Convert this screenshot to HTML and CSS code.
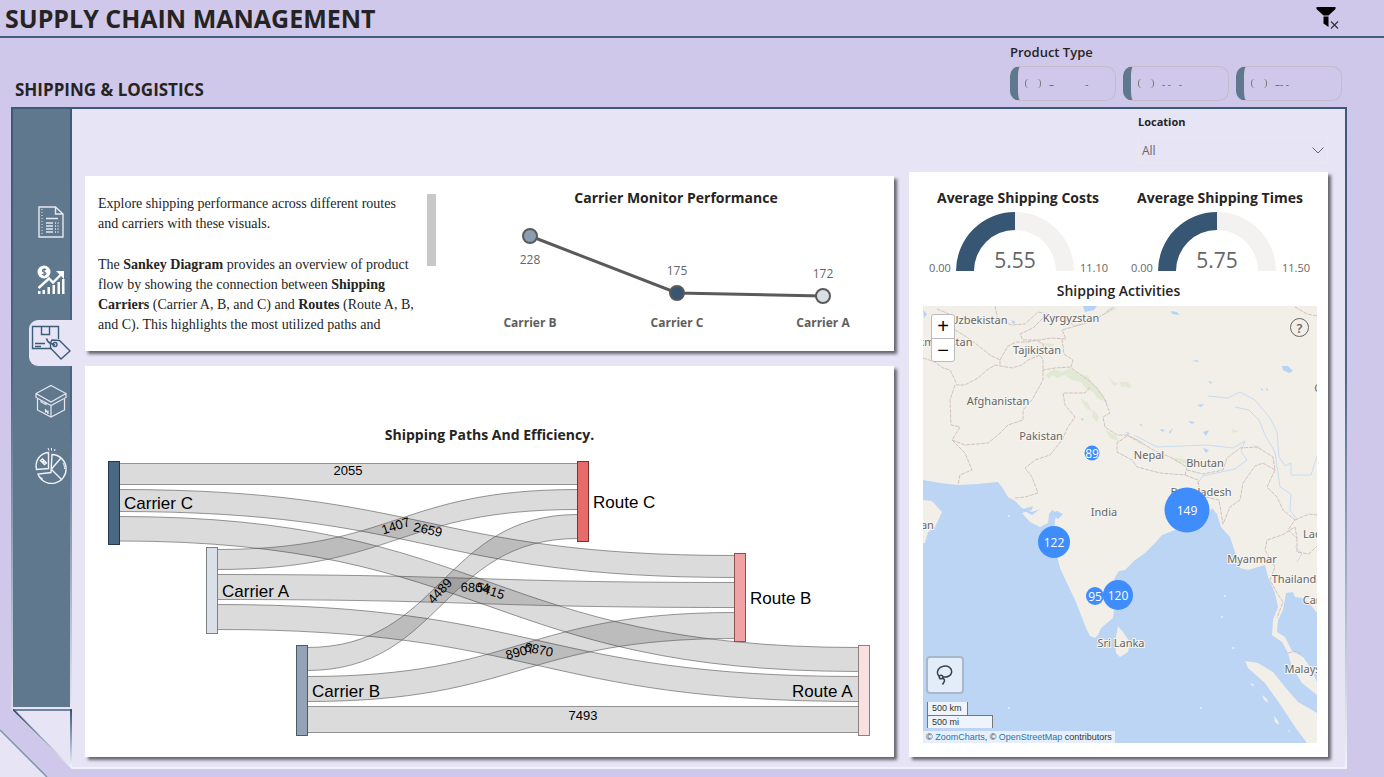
FILE: index.html
```html
<!DOCTYPE html>
<html lang="en">
<head>
    <meta charset="UTF-8">
    <meta name="viewport" content="width=device-width, initial-scale=1.0">
    <title>Supply Chain Management</title>
    <link rel="stylesheet" href="styles.css">
</head>

<body>
    <header class="topbar">
        <h1>SUPPLY CHAIN MANAGEMENT</h1>
        <button class="clear-filter" type="button" aria-label="Clear filters">
            <svg width="24" height="24" viewBox="0 0 24 24">
                <path d="M1.500 1h19v2l-7 6.500h-5l-7-6.500z"/>
                <path d="M8.500 10.500h5v10.500l-5-3.500z"/>
                <path d="M16 15.500l7 7M23 15.500l-7 7" fill="none" stroke="#333" stroke-width="1.200"/>
            </svg>
        </button>
    </header>

    <div class="subbar">
        <h2 class="page-title">SHIPPING &amp; LOGISTICS</h2>
        <fieldset class="slicer">
            <legend>Product Type</legend>
            <div class="slicer-options">
                <label class="option"><input type="radio" name="product"><span>–            -</span></label>
                <label class="option"><input type="radio" name="product"><span>- -   -</span></label>
                <label class="option"><input type="radio" name="product"><span>–- -</span></label>
            </div>
        </fieldset>
    </div>

    <main class="panel">
        <div class="side">
            <nav class="side-nav">
                <a href="#" aria-label="Report">
                    <svg width="26" height="32" viewBox="0 0 26 32" fill="none" stroke="#e6e8f2" stroke-width="1.400">
                        <path d="M1 1h16.500l7.500 7v23H1zM17.500 1v7H25"/>
                        <path d="M4 3v26" stroke-dasharray="1 2" stroke-width="1"/>
                        <path d="M8 12.500h12"/>
                        <path d="M8 17h7M8 20h7M8 23h7M8 26h7M17 17h1M19.500 17h1M17 20h1M19.500 20h1M17 23h1M19.500 23h1M17 26h1M19.500 26h1"/>
                    </svg>
                </a>
                <a href="#" aria-label="Sales">
                    <svg width="28" height="30" viewBox="0 0 28 30" fill="#fff">
                        <circle cx="7" cy="7" r="6.500"/>
                        <path d="M9 5c-.8-1.200-3.600-1-3.600.6 0 1.700 3.600 1.100 3.600 2.900 0 1.600-3 1.800-4 .5M7.100 3.200v7.800" fill="none" stroke="#5f788e" stroke-width="1.200"/>
                        <path d="M1.500 23l10.500-9.500 4 4L25 8.500" fill="none" stroke="#fff" stroke-width="2.400"/>
                        <path d="M19 6h8v8z"/>
                        <path d="M1 26h2.500v3H1zM5.500 25H8v4H5.500zM10.500 22H13v7h-2.500zM15.500 20H18v9h-2.500zM20.500 17H23v12h-2.500zM25 14h2.500v15H25z"/>
                    </svg>
                </a>
                <a href="#" class="active" aria-label="Shipping and logistics">
                    <svg width="40" height="36" viewBox="0 0 40 36" fill="none" stroke="#3d5c78" stroke-width="1.400">
                        <path d="M27.500 14V1.500H1.500v22H21M10.500 1.500v8h8v-8"/>
                        <path d="M4 18.500h10M4 21.500h6"/>
                        <path d="M19.500 18l1.500-3 7.500.500L39 26l-9 8-10.500-11z"/>
                        <circle cx="24" cy="19.500" r="2"/>
                        <path d="M24 20l-4-1.500c-3-1-4-3-4.500-5"/>
                    </svg>
                </a>
                <a href="#" aria-label="Inventory">
                    <svg width="32" height="34" viewBox="0 0 32 34" fill="none" stroke="#e6e8f2" stroke-width="1.200">
                        <path d="M16 1.500L31 9.500v4l-15 8L1 13.500v-4zM1 9.500L16 18l15-8.500M16 21.500V33"/>
                        <path d="M2.500 15v11L16 33l13.500-7V15"/>
                        <path d="M6 16.500v1.500l5 2.500v-2M10.500 25v3.500M13 26.500V30M10.500 26l2.500 3"/>
                    </svg>
                </a>
                <a href="#" class="last" aria-label="Breakdown">
                    <svg width="34" height="36" viewBox="0 0 34 36" fill="none" stroke="#f2f3f8" stroke-width="1.400">
                        <path d="M18 6.500a14.500 14.500 0 1 1-14 19.500l13-1.500z"/>
                        <path d="M17.500 21L27 10M17.500 21.500L28 32"/>
                        <path d="M14.500 4.500C6 5 .5 13 2.500 21.500l12-1z"/>
                        <path d="M6.500 12.500l2-1.500 1.500 1.500-2 1.500zM9 15l2-1.500 1.500 1.500-2 1.500z"/>
                        <path d="M14 0l1 2.500M17.500 0v2.500M21 1l-.5 2" stroke-width="1"/>
                        <path d="M29 15c1.500 2.500 1.500 4 1.500 6M6 29l3 2" stroke-width="1"/>
                    </svg>
                </a>
            </nav>
            <svg class="fold" viewBox="0 0 60 58" preserveAspectRatio="none">
                <defs>
                    <linearGradient id="fade" x1="0" y1="0" x2="0" y2="1">
                        <stop offset="0" stop-color="#2f5272"/>
                        <stop offset="1" stop-color="#f0f4fc"/>
                    </linearGradient>
                </defs>
                <path d="M0 1h60" stroke="#4a6580" stroke-width="1.500"/>
                <path d="M0 0l1 0 58 58h-2L0 2z" fill="url(#fade)"/>
                <path d="M58 0h2v58h-2z" fill="url(#fade)"/>
            </svg>
        </div>

        <div class="content">
            <div class="left-col">
                <section class="card overview">
                    <div class="story">
                        <div class="story-text">
                            <p>Explore shipping performance across different routes and carriers with these visuals.</p>
                            <p>The <b>Sankey Diagram</b> provides an overview of product flow by showing the connection between <b>Shipping Carriers</b> (Carrier A, B, and C) and <b>Routes</b> (Route A, B, and C). This highlights the most utilized paths and</p>
                        </div>
                        <div class="thumb"></div>
                    </div>
                    <div class="monitor">
                        <h3>Carrier Monitor Performance</h3>
                        <svg class="chart" viewBox="0 0 436 130">
                            <path d="M72 28L219 85L365 88" fill="none" stroke="#5a5a5a" stroke-width="3"/>
                            <g stroke="#5a5a5a" stroke-width="2">
                                <circle cx="72" cy="28" r="7" fill="#8a9db1"/>
                                <circle cx="219" cy="85" r="7" fill="#375673"/>
                                <circle cx="365" cy="88" r="7" fill="#d8dfe7"/>
                            </g>
                            <g class="value">
                                <text x="72" y="56">228</text>
                                <text x="219" y="67">175</text>
                                <text x="365" y="70">172</text>
                            </g>
                            <g class="category">
                                <text x="72" y="119">Carrier B</text>
                                <text x="219" y="119">Carrier C</text>
                                <text x="365" y="119">Carrier A</text>
                            </g>
                        </svg>
                    </div>
                </section>

                <section class="card paths">
                    <h3>Shipping Paths And Efficiency.</h3>
                    <svg class="chart" viewBox="0 0 809 300">
                        <g class="flow">
                            <path d="M34 13.500H493V34.500H34z"/>
                            <path d="M34 39.500C342 39.500 342 105.500 650 105.500V127.500C342 127.500 342 61.500 34 61.500z"/>
                            <path d="M34 66.500C404 66.500 404 197.500 774 197.500V221.500C404 221.500 404 91 34 91z"/>
                            <path d="M132 99.500C312 99.500 312 39.500 493 39.500V59.500C312 59.500 312 119.500 132 119.500z"/>
                            <path d="M132 124.500C391 124.500 391 132.500 650 132.500V157.500C391 157.500 391 149.500 132 149.500z"/>
                            <path d="M132 154.500C453 154.500 453 226.500 774 226.500V251.500C453 251.500 453 179.500 132 179.500z"/>
                            <path d="M222 197.500C357 197.500 357 64.500 493 64.500V88.500C357 88.500 357 220.500 222 220.500z"/>
                            <path d="M222 226.500C436 226.500 436 162.500 650 162.500V188.500C436 188.500 436 251.500 222 251.500z"/>
                            <path d="M222 256.500H774V282.500H222z"/>
                        </g>
                        <g class="flow-value">
                            <text x="263" y="25">2055</text>
                            <text transform="translate(312 80) rotate(-18)">1407</text>
                            <text transform="translate(342 84) rotate(12)">2659</text>
                            <text transform="translate(358 144) rotate(-47)">4489</text>
                            <text transform="translate(390 142) rotate(2)">6804</text>
                            <text transform="translate(404 145) rotate(18)">5415</text>
                            <text transform="translate(436 206) rotate(-15)">8907</text>
                            <text transform="translate(453 204) rotate(11)">6870</text>
                            <text x="498" y="270">7493</text>
                        </g>
                        <g class="node">
                            <rect x="23.500" y="11.500" width="11" height="83" fill="#4b6882" stroke="#1f3a52"/>
                            <rect x="121.500" y="97.500" width="11" height="86" fill="#dae0e8" stroke="#7b8085"/>
                            <rect x="211.500" y="195.500" width="11" height="90" fill="#93a3b5" stroke="#4d5b69"/>
                            <rect x="492.500" y="11.500" width="11" height="80" fill="#e76b6b" stroke="#7e2f2f"/>
                            <rect x="649.500" y="103.500" width="11" height="88" fill="#efa3a5" stroke="#8a5052"/>
                            <rect x="773.500" y="195.500" width="11" height="90" fill="#f8dfe0" stroke="#8f7f80"/>
                        </g>
                        <g class="node-label">
                            <text x="39" y="59">Carrier C</text>
                            <text x="137" y="147">Carrier A</text>
                            <text x="227" y="247">Carrier B</text>
                            <text x="508" y="58">Route C</text>
                            <text x="665" y="154">Route B</text>
                            <text x="707" y="247">Route A</text>
                        </g>
                    </svg>
                </section>
            </div>

            <div class="right-col">
                <div class="location">
                    <label for="location">Location</label>
                    <div class="select-box">
                        <select id="location">
                            <option>All</option>
                        </select>
                        <svg width="12" height="7" viewBox="0 0 12 7"><path d="M.5.5L6 6 11.500.5" fill="none" stroke="#666"/></svg>
                    </div>
                </div>

                <section class="card shipping">
                    <div class="gauges">
                        <div class="gauge">
                            <h3>Average Shipping Costs</h3>
                            <svg class="chart" viewBox="0 0 202 68">
                                <path d="M39 63A59 59 0 0 1 98 4V22A41 41 0 0 0 57 63z" fill="#375673"/>
                                <path d="M98 4A59 59 0 0 1 157 63H139A41 41 0 0 0 98 22z" fill="#f3f2f1"/>
                                <text class="gauge-value" x="98" y="60">5.55</text>
                                <text class="gauge-end" x="23" y="64">0.00</text>
                                <text class="gauge-end" x="177" y="64">11.10</text>
                            </svg>
                        </div>
                        <div class="gauge">
                            <h3>Average Shipping Times</h3>
                            <svg class="chart" viewBox="0 0 202 68">
                                <path d="M39 63A59 59 0 0 1 98 4V22A41 41 0 0 0 57 63z" fill="#375673"/>
                                <path d="M98 4A59 59 0 0 1 157 63H139A41 41 0 0 0 98 22z" fill="#f3f2f1"/>
                                <text class="gauge-value" x="98" y="60">5.75</text>
                                <text class="gauge-end" x="23" y="64">0.00</text>
                                <text class="gauge-end" x="177" y="64">11.50</text>
                            </svg>
                        </div>
                    </div>
                    <h3 class="map-title">Shipping Activities</h3>
                    <div class="map">
                        <svg class="chart" viewBox="0 0 394 437">
                            <rect width="394" height="437" fill="#bcd5f4"/>
                            <!-- land -->
                            <g fill="#f2efe9">
                                <path d="M0 0H394V307L387 298 380 292 372 291 370 286 363 287 360 304 355 314 354 326 362 331 369 345 380 351 387 361 394 376V389L379 377 369 361 365 347 359 336 349 329 350 314 355 301 352 287 345 271 342 259 335 261 325 264 317 262 312 246 307 231 298 221 294 208 289 202 280 216 252 224 239 229 232 237 222 247 212 254 202 264 196 265 192 271 189 285 191 304 190 312 184 317 178 322 175 329 172 332 167 330 163 322 160 314 152 294 144 277 137 262 135 254 131 234 132 214 134 207 129 204 126 208 125 217 117 221 107 216 99 207 109 204 110 200 100 203 92 195 85 191 79 181 75 176 54 178 35 179 17 177 0 174z"/>
                                <path d="M0 194L9 195 19 206 12 221 5 226 2 237H0z"/>
                                <path d="M195 320L200 326 207 336 205 346 197 351 193 347 192 336z"/>
                                <path d="M322 355L335 357 350 366 362 381 375 396 389 404 394 407V437H384L372 421 359 401 342 377 325 362z"/>
                                <path d="M339 389l4 3 3 5-5-3zM351 410l4 5 1 4-4-3zM327 377l5 2-3 1zM364 422l3 3v2z"/>
                                <circle cx="302" cy="290" r="1"/><circle cx="299" cy="311" r="1"/><circle cx="310" cy="342" r="1"/><circle cx="278" cy="402" r="1"/><circle cx="86" cy="402" r="1"/><circle cx="86" cy="210" r="1"/>
                            </g>
                            <!-- hills -->
                            <g fill="#dbe7cd" opacity=".7">
                                <path d="M123 68l8-5 8 3 8-4 9 6 9 2 4 6 6 7 7 8-2 4-6-3-4-6-7-3-5-7-9-2-7-5-8 3-4-3-5 4zM157 92l8 5 4 9-6-4zM170 103l6 8-2 6-5-7zM182 124l10 5 5 7-10-4zM185 70l6 6 5 2-5 2zM196 75l12 4v3l-10-3z"/>
                                <path d="M197 76h8l2 3-9 2zM247 151l14 2 14 3-8 3-15-4zM308 123l8 2-6 2zM208 130l8 4 8 6-9-3zM328 138l10 3-4 2zM118 37l14 1-6 4zM190 0l4 2-14 8 6-8z"/>
                            </g>
                            <!-- lakes and rivers -->
                            <g fill="#b5d3f6">
                                <path d="M160 0h14l-3 4-9 2zM359 60l6 0 5 5-4 2-6-3zM248 5l6 1 2 3-7-1zM269 55l5-1 2 2zM0 4l4 4-3 4zM88 14l5 2-3 2zM285 75l4 1-1 2zM337 82l3 1v2zM342 82l3 1v2zM274 99l7-1-3 3zM265 115l7 1-3 2zM216 118l4 1-2 1zM237 123l5 1-3 2zM246 126l4-4-3 6zM280 126l6-2-3 6zM280 142l6 2-3 3zM158 112l3 1-2 2zM181 94l3 1-1 2zM203 126l4 1-2 2zM128 208l6-3 6 3-5 5zM95 201l14 5 8-3-8 6z"/>
                            </g>
                            <path class="river" d="M211 129L234 141 284 139 310 142 322 135 318 145 324 154 312 163 280 170 274 178M285 90L305 92 317 86 332 94 347 112 354 126 356 151 362 160 368 157 368 169 388 169 394 150M312 101L326 104 336 114 342 129 352 146 357 181 368 188 367 204 374 214M372 240l7 8-5 8"/>
                            <!-- borders -->
                            <g class="border">
                                <path d="M0 52L12 56 20 62 27 64 32 74 34 79 42 79 55 72 64 64 72 59 89 62 99 59 105 54 117 49 120 54 120 66"/>
                                <path d="M32 79L27 94 28 119 37 121 29 134 42 147 49 164 37 169 35 179"/>
                                <path d="M29 134L42 139 65 137 75 129 85 119 100 114 100 104 109 94 120 74 120 64 132 62 147 61 165 74 174 82 182 94 187 107 180 111 182 121 194 129 204 129 212 134"/>
                                <path d="M14 3L26 8 32 24 42 30 52 37 67 49 77 54 77 59M72 0L75 14 89 19 102 18 115 6 124 8 110 22 97 28 100 34 113 34 120 38 121 48M77 54L85 40 93 36 104 36M124 10L140 12 152 20 170 15 190 2M104 36L128 32 143 33 139 24 160 18M139 33L141 48 150 54 148 61"/>
                                <path d="M167 81L162 87 140 87 142 99 152 111 145 121 139 134 127 149 112 154 102 162 109 171 115 187 102 191 92 192"/>
                                <path d="M204 130L194 137 194 146 209 154 214 161 237 167 262 169 264 161 247 151 230 144 214 134 204 129"/>
                                <path d="M264 164L280 168 300 164 304 152 317 142 334 141 350 151 352 164 340 157 332 160 320 177 317 194 307 201 300 218 296 194 278 190 275 174 262 169"/>
                                <path d="M352 164L344 181 354 191 360 204 372 214 365 224 374 232 372 221 359 229 344 234 342 244 352 261 347 274 354 287 360 296 354 312M372 214L386 208 394 209M374 232L374 246 386 248 394 240M372 1L384 8 394 10M365 347L374 345 379 348"/>
                            </g>
                            <g class="place">
                                <text x="56" y="18">Uzbekistan</text>
                                <text x="148" y="16">Kyrgyzstan</text>
                                <text x="14" y="40">Turkmenistan</text>
                                <text x="114" y="48">Tajikistan</text>
                                <text x="75" y="99">Afghanistan</text>
                                <text x="118" y="134">Pakistan</text>
                                <text x="226" y="153">Nepal</text>
                                <text x="282" y="161">Bhutan</text>
                                <text x="278" y="190">Bangladesh</text>
                                <text x="181" y="210">India</text>
                                <text x="-5" y="223">Oman</text>
                                <text x="392" y="232">Laos</text>
                                <text x="329" y="257">Myanmar</text>
                                <text x="371" y="277">Thailand</text>
                                <text x="406" y="298">Cambodia</text>
                                <text x="198" y="341">Sri Lanka</text>
                                <text x="384" y="367">Malaysia</text>
                                <text x="406" y="86">China</text>
                            </g>
                            <g class="bubble">
                                <circle cx="169" cy="147" r="7.500"/>
                                <circle cx="264" cy="204" r="22.500"/>
                                <circle cx="131" cy="236" r="16"/>
                                <circle cx="172" cy="290" r="9"/>
                                <circle cx="195" cy="289" r="15"/>
                                <text x="169" y="152">89</text>
                                <text x="264" y="209">149</text>
                                <text x="131" y="241">122</text>
                                <text x="172" y="295">95</text>
                                <text x="195" y="294">120</text>
                            </g>
                        </svg>
                        <div class="zoom-buttons">
                            <button type="button" aria-label="Zoom in">+</button>
                            <button type="button" aria-label="Zoom out">−</button>
                        </div>
                        <button class="help" type="button">?</button>
                        <div class="map-foot">
                            <button class="lasso" type="button" aria-label="Lasso select">
                                <svg width="18" height="22" viewBox="0 0 18 22" fill="none" stroke="#3a4450" stroke-width="1.500">
                                    <path d="M4 12.500C1 11 .8 8 2.300 5.500 4.300 2.300 10 1 13.500 3.300c3.200 2.200 2.800 7-.5 8.700-2.300 1.200-4.500 1.300-6.500.8"/>
                                    <circle cx="5" cy="13" r="1.800"/>
                                    <path d="M6.500 14c2 1 2.500 2.500 1.500 4L6.500 20.500"/>
                                </svg>
                            </button>
                            <div class="scale km">500 km</div>
                            <div class="scale mi">500 mi</div>
                            <div class="credit">© <a href="#">ZoomCharts</a>, © <a href="#">OpenStreetMap</a> contributors</div>
                        </div>
                    </div>
                </section>
            </div>
        </div>
    </main>

    <svg class="corner" width="48" height="48" viewBox="0 0 48 48">
        <path d="M0 1l47 47H0z" fill="#e6e4f5"/>
        <path d="M0 1l47 47" stroke="#7f95aa" stroke-width="1.500"/>
    </svg>
</body>
</html>
```

FILE: styles.css
```css
* {
    box-sizing: border-box;
}

body {
    margin: 0;
    position: relative;
    min-height: 100vh;
    padding-bottom: 8px;
    display: flex;
    flex-direction: column;
    background: #d0c8ea;
    color: #252423;
    font-family: "Open Sans", "Noto Sans", sans-serif;
    overflow-x: hidden;
}

h1, h2, h3, p {
    margin: 0;
}

button {
    padding: 0;
    border: none;
    background: none;
    cursor: pointer;
}

.topbar {
    display: flex;
    justify-content: space-between;
    align-items: center;
    height: 38px;
    padding: 0 45px 0 5px;
    border-bottom: 2px solid #3f5f7d;
}

.topbar h1 {
    font-size: 25px;
    line-height: 36px;
}

.clear-filter svg {
    display: block;
}

.subbar {
    display: flex;
    justify-content: space-between;
    align-items: flex-end;
    padding: 5px 42px 6px 15px;
}

.page-title {
    font-size: 17px;
    line-height: 22px;
}

.slicer {
    margin: 0;
    padding: 0;
    border: none;
}

.slicer legend {
    padding: 0;
    font-size: 13px;
    font-weight: 600;
    line-height: 18px;
}

.slicer-options {
    display: flex;
    gap: 7px;
    padding-top: 5px;
}

.option {
    display: flex;
    align-items: center;
    gap: 8px;
    width: 106px;
    height: 35px;
    padding-left: 7px;
    border: 1px solid #c2bccb;
    border-left: 8px solid #5f788e;
    border-radius: 10px;
    color: #666;
    font-size: 10px;
}

.option input {
    appearance: none;
    margin: 0;
    width: 16px;
    height: 9px;
    border: solid #777;
    border-width: 0 1px;
    border-radius: 4px;
}

.option span {
    white-space: pre;
}

.panel {
    flex: 1;
    display: flex;
    margin: 0 37px 0 11px;
    border: 2px solid;
    border-image: linear-gradient(#3a5a78, #4a6784 40%, #f0f4fc) 2;
    background: #e6e4f5;
    clip-path: polygon(0 0, 100% 0, 100% 100%, 61px 100%, 0 calc(100% - 60px));
}

.side {
    display: flex;
    flex-direction: column;
    width: 59px;
}

.side-nav {
    flex: 1;
    display: flex;
    flex-direction: column;
    gap: 12px;
    margin-bottom: 2px;
    padding-top: 90px;
    border-right: 2px solid;
    border-image: linear-gradient(#3a5a78, #4a6784 50%, #e6e4f5) 2;
    background: #5f788e;
}

.side-nav a {
    display: flex;
    justify-content: center;
    align-items: center;
    height: 46px;
    padding-left: 19px;
}

.side-nav .active {
    margin: 5px -2px 0 16px;
    padding: 0;
    border-radius: 9px 0 0 9px;
    background: #e6e4f5;
}

.side-nav .last {
    margin-top: 7px;
}

.fold {
    display: block;
    width: 100%;
    height: 58px;
}

.content {
    flex: 1;
    display: grid;
    grid-template-columns: 809fr 419fr;
    gap: 15px;
    padding: 0 17px 10px 13px;
}

.left-col {
    display: flex;
    flex-direction: column;
    gap: 15px;
    padding-top: 67px;
}

.right-col {
    display: flex;
    flex-direction: column;
}

.card {
    background: #fff;
    box-shadow: 3px 3px 3px #66646e;
}

.card h3 {
    font-size: 14px;
    line-height: 20px;
    text-align: center;
}

.chart {
    display: block;
    width: 100%;
    height: auto;
}

.overview {
    display: grid;
    grid-template-columns: 351fr 458fr;
}

.story {
    display: flex;
    padding: 18px 0 14px 13px;
    font-family: "Liberation Serif", serif;
    font-size: 14px;
    line-height: 20px;
}

.story-text {
    flex: 1;
    height: 142px;
    padding-right: 9px;
    overflow: hidden;
}

.story-text p + p {
    margin-top: 21px;
}

.thumb {
    width: 9px;
    height: 72px;
    background: #c8c8c8;
}

.monitor {
    padding: 12px 0 13px 22px;
}

.value, .gauge-end {
    fill: #666;
    font-size: 12px;
    text-anchor: middle;
}

.gauge-end {
    font-size: 11px;
}

.category {
    fill: #605e5c;
    font-size: 12px;
    font-weight: bold;
    text-anchor: middle;
}

.paths {
    flex: 1;
    padding: 59px 0 7px;
}

.paths .chart {
    margin-top: 5px;
}

.flow {
    fill: #000;
    fill-opacity: .14;
    stroke: #555;
    stroke-opacity: .6;
}

.flow-value, .node-label {
    font-family: "Liberation Sans", sans-serif;
    fill: #000;
}

.flow-value {
    font-size: 13px;
    text-anchor: middle;
}

.node-label {
    font-size: 17px;
}

.location {
    align-self: flex-end;
    width: 190px;
    padding: 3px 0 9px;
}

.location label {
    display: block;
    padding-bottom: 5px;
    font-weight: bold;
    font-size: 11px;
    line-height: 20px;
}

.select-box {
    position: relative;
}

.select-box select {
    display: block;
    appearance: none;
    width: 100%;
    height: 26px;
    padding: 1px 3px 0;
    border: 1px solid #e9e9ee;
    background: transparent;
    color: #666;
    font-family: inherit;
    font-size: 12px;
}

.select-box svg {
    position: absolute;
    right: 4px;
    top: 10px;
}

.shipping {
    flex: 1;
    padding: 16px 0 14px;
}

.gauges {
    display: grid;
    grid-template-columns: 1fr 1fr;
    padding: 0 7px 0 8px;
}

.gauge-value {
    fill: #666;
    font-size: 21px;
    text-anchor: middle;
}

.shipping .map-title {
    padding: 5px 0;
    font-weight: 600;
}

.map {
    position: relative;
    margin: 0 11px 0 14px;
    overflow: hidden;
}

.river {
    fill: none;
    stroke: #c9dcf2;
}

.border {
    fill: none;
    stroke: #d2c2be;
    stroke-dasharray: 4 1;
}

.place {
    fill: #666;
    stroke: #f7f5f1;
    stroke-width: 2;
    paint-order: stroke;
    font-family: "Noto Sans", sans-serif;
    font-size: 11px;
    text-anchor: middle;
}

.bubble {
    fill: #3f8cfd;
}

.bubble text {
    fill: #fff;
    font-size: 12px;
    text-anchor: middle;
}

.zoom-buttons {
    position: absolute;
    left: 8px;
    top: 8px;
    display: flex;
    flex-direction: column;
    width: 24px;
    border: 1px solid #bbb;
    border-radius: 3px;
    background: #fff;
}

.zoom-buttons button {
    height: 23px;
    color: #000;
    font: 20px/21px "Liberation Sans", sans-serif;
}

.zoom-buttons button + button {
    border-top: 1px solid #bbb;
}

.help {
    position: absolute;
    right: 8px;
    top: 12px;
    width: 19px;
    height: 19px;
    border: 1px solid #666;
    border-radius: 50%;
    color: #666;
    font: 600 13px/16px "Open Sans", sans-serif;
}

.map-foot {
    position: absolute;
    left: 0;
    bottom: 0;
    font: 9px/12px "Liberation Sans", sans-serif;
    color: #333;
}

.lasso {
    display: flex;
    justify-content: center;
    align-items: center;
    width: 38px;
    height: 38px;
    margin: 0 0 8px 3px;
    border: 2px solid #a9b8c9;
    border-radius: 4px;
    background: #e3edfa;
}

.scale {
    height: 13px;
    margin-left: 4px;
    padding-left: 4px;
    border: 1px solid #777;
    border-top: none;
    background: #eef3fc;
}

.km {
    width: 41px;
    border-bottom: none;
}

.mi {
    width: 66px;
    border-top: 1px solid #777;
    border-bottom: none;
}

.credit {
    margin-top: 3px;
    padding: 0 3px;
    background: #e6effb;
}

.credit a {
    color: #1f78a8;
    text-decoration: none;
}

.corner {
    position: absolute;
    left: 0;
    bottom: 0;
    z-index: -1;
}
```
